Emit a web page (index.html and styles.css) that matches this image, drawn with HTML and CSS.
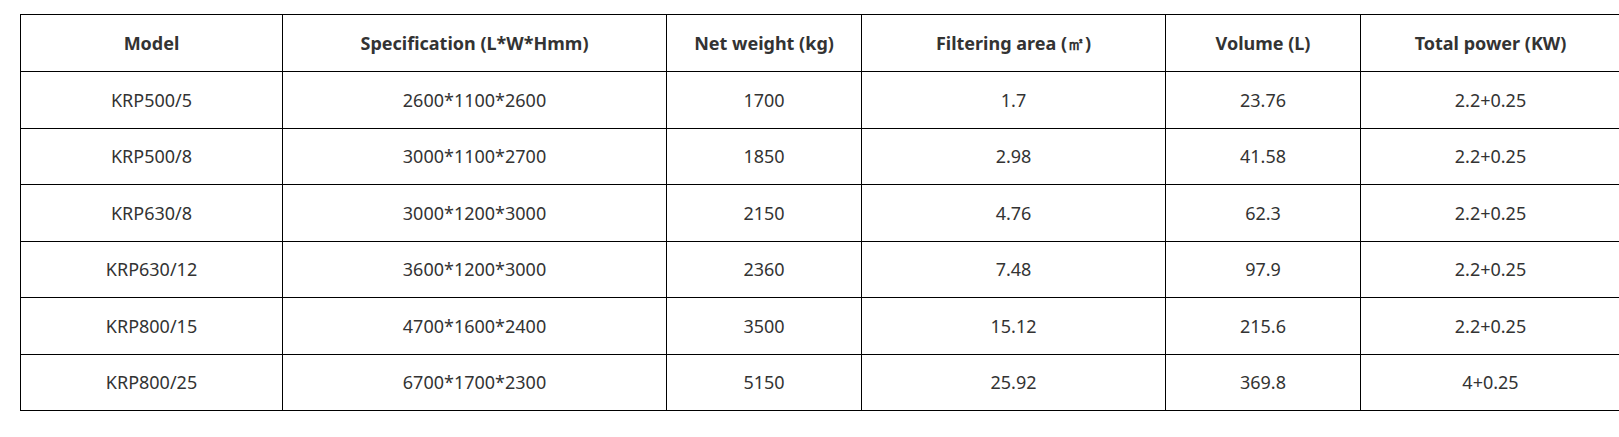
FILE: index.html
```html
<!DOCTYPE html>
<html lang="en">
<head>
    <meta charset="UTF-8" />
    <meta name="viewport" content="width=device-width, initial-scale=1.0" />
    <title>Product parameters</title>
    <link rel="stylesheet" href="styles.css">
</head>
<body>
    <div class="wrap">
        <table class="spec">
            <colgroup>
                <col class="c1">
                <col class="c2">
                <col class="c3">
                <col class="c4">
                <col class="c5">
                <col class="c6">
            </colgroup>
            <thead>
                <tr>
                    <th>Model</th>
                    <th>Specification (L*W*Hmm)</th>
                    <th>Net weight (kg)</th>
                    <th>Filtering area (㎡)</th>
                    <th>Volume (L)</th>
                    <th>Total power (KW)</th>
                </tr>
            </thead>
            <tbody>
                <tr>
                    <td>KRP500/5</td>
                    <td>2600*1100*2600</td>
                    <td>1700</td>
                    <td>1.7</td>
                    <td>23.76</td>
                    <td>2.2+0.25</td>
                </tr>
                <tr>
                    <td>KRP500/8</td>
                    <td>3000*1100*2700</td>
                    <td>1850</td>
                    <td>2.98</td>
                    <td>41.58</td>
                    <td>2.2+0.25</td>
                </tr>
                <tr>
                    <td>KRP630/8</td>
                    <td>3000*1200*3000</td>
                    <td>2150</td>
                    <td>4.76</td>
                    <td>62.3</td>
                    <td>2.2+0.25</td>
                </tr>
                <tr>
                    <td>KRP630/12</td>
                    <td>3600*1200*3000</td>
                    <td>2360</td>
                    <td>7.48</td>
                    <td>97.9</td>
                    <td>2.2+0.25</td>
                </tr>
                <tr>
                    <td>KRP800/15</td>
                    <td>4700*1600*2400</td>
                    <td>3500</td>
                    <td>15.12</td>
                    <td>215.6</td>
                    <td>2.2+0.25</td>
                </tr>
                <tr>
                    <td>KRP800/25</td>
                    <td>6700*1700*2300</td>
                    <td>5150</td>
                    <td>25.92</td>
                    <td>369.8</td>
                    <td>4+0.25</td>
                </tr>
            </tbody>
        </table>
    </div>
</body>
</html>
```

FILE: styles.css
```css
* {
    margin: 0;
    padding: 0;
    box-sizing: border-box;
}
html, body {
    overflow: hidden;
    background-color: white;
}
body {
    font-family: 'Noto Sans', 'Open Sans', sans-serif;
    color: rgb(51, 51, 51);
}
.wrap {
    padding: 14px 0 0 20px;
}
.spec {
    border-collapse: collapse;
    table-layout: fixed;
    width: 1600px;
    font-size: 18px;
}
.c1 { width: 262px; }
.c2 { width: 384px; }
.c3 { width: 195px; }
.c4 { width: 304px; }
.c5 { width: 195px; }
.c6 { width: 260px; }
.spec th,
.spec td {
    border: 1px solid black;
    text-align: center;
    vertical-align: middle;
}
.spec th {
    height: 57px;
    font-weight: bold;
}
.spec td {
    height: 56.5px;
    font-weight: normal;
}
```
